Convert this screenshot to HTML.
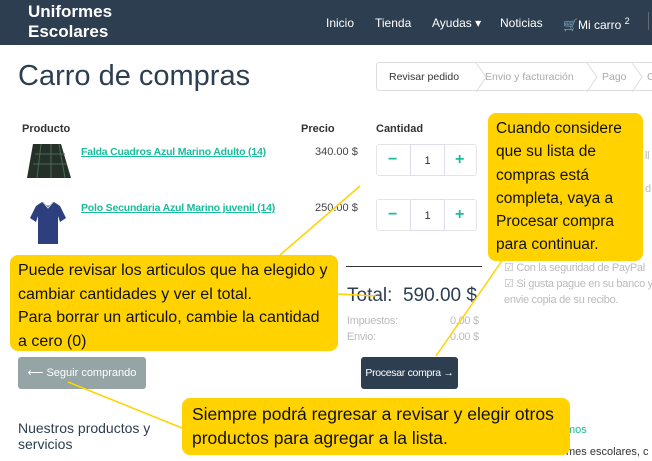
<!DOCTYPE html>
<html><head><meta charset="utf-8"><style>
*{box-sizing:border-box;margin:0;padding:0}
body{width:652px;height:461px;overflow:hidden;background:#fff;font-family:"Liberation Sans",sans-serif;color:#2c3e50;position:relative}
.nav{position:absolute;left:0;top:0;width:652px;height:45px;background:#2c3e50;color:#fff}
.brand{position:absolute;left:28px;top:2px;font-weight:bold;font-size:17px;line-height:20px}
.nav span{position:absolute;top:16px;font-size:12px;white-space:nowrap}
.ab{position:absolute}
h1{position:absolute;left:18px;top:60px;font-weight:normal;font-size:29px;color:#2c3e50}
.steps{position:absolute;left:376px;top:62px;width:290px;height:29px;border:1px solid #ddd;border-radius:3px;font-size:10.5px}
.steps span{position:absolute;top:8px;white-space:nowrap}
.th{position:absolute;top:123px;font-size:11px;font-weight:bold;color:#333}
.link{position:absolute;font-size:10.5px;color:#1abc9c;text-decoration:underline;font-weight:bold;white-space:nowrap;letter-spacing:-0.2px}
.pr{position:absolute;font-size:11px;color:#444}
.qty{position:absolute;left:376px;width:101px;height:32px;border:1px solid #e5e5e5;border-radius:3px}
.qty b{position:absolute;top:6px;color:#1abc9c;font-size:16px}
.qty i{position:absolute;left:33px;top:-1px;width:35px;height:32px;border:1px solid #dde;font-style:normal;font-size:11px;text-align:center;line-height:32px;color:#333}
.call{position:absolute;background:#ffd200;border-radius:8px;color:#111;font-size:16px;padding:4px 8px;white-space:nowrap}
.gray{color:#bbb;font-size:11px;position:absolute;white-space:nowrap;letter-spacing:-0.3px}
</style></head><body>
<div class="nav">
<div class="brand">Uniformes<br>Escolares</div>
<span style="left:326px">Inicio</span>
<span style="left:375px">Tienda</span>
<span style="left:432px">Ayudas ▾</span>
<span style="left:500px">Noticias</span>
<span style="left:563px">🛒Mi carro <sup style="font-size:9px">2</sup></span>
<div class="ab" style="left:648px;top:12px;width:1px;height:18px;background:#667"></div>
</div>
<h1>Carro de compras</h1>
<div class="steps"><span style="left:12px;color:#333">Revisar pedido</span><span style="left:108px;color:#aaa">Envio y facturación</span><span style="left:225px;color:#aaa">Pago</span><span style="left:270px;color:#aaa">C</span>
<svg class="ab" style="left:0;top:0" width="290" height="29"><polyline points="99,0 109,14 99,29" fill="none" stroke="#ddd"/><polyline points="210,0 220,14 210,29" fill="none" stroke="#ddd"/><polyline points="255,0 265,14 255,29" fill="none" stroke="#ddd"/></svg></div>
<div class="th" style="left:22px">Producto</div><div class="th" style="left:301px">Precio</div><div class="th" style="left:376px">Cantidad</div>
<svg class="ab" style="left:25px;top:142px" width="50" height="40"><polygon points="8,2 36,2 46,36 2,36" fill="#253028"/><path d="M10,12H40M8,22H42M16,2L12,36M26,2V36M34,2L40,36" stroke="#4a6a52" stroke-width="1"/></svg>
<svg class="ab" style="left:28px;top:200px" width="40" height="48"><path d="M14,2L8,6L2,18L8,22L10,16V44H30V16L32,22L38,18L32,6L26,2L20,6Z" fill="#2d3f7c"/><path d="M15,2L20,8L25,2" stroke="#ddd" fill="none"/></svg>
<div class="link" style="left:81px;top:146px">Falda Cuadros Azul Marino Adulto (14)</div>
<div class="link" style="left:81px;top:202px">Polo Secundaria Azul Marino juvenil (14)</div>
<div class="pr" style="left:315px;top:146px">340.00 $</div>
<div class="pr" style="left:315px;top:202px">250.00 $</div>
<div class="qty" style="top:144px"><b style="left:11px">−</b><i>1</i><b style="left:78px">+</b></div>
<div class="qty" style="top:199px"><b style="left:11px">−</b><i>1</i><b style="left:78px">+</b></div>
<div class="ab" style="left:346px;top:266px;width:136px;height:1px;background:#333"></div>
<div class="ab" style="left:347px;top:285px;font-size:19px;color:#2c3e50;white-space:nowrap">Total: &nbsp;590.00 $</div>
<div class="gray" style="left:347px;top:315px">Impuestos:</div><div class="gray" style="left:450px;top:315px">0.00 $</div>
<div class="gray" style="left:347px;top:331px">Envio:</div><div class="gray" style="left:450px;top:331px">0.00 $</div>
<div class="gray" style="left:504px;top:260px;line-height:16px">☑ Con la seguridad de PayPal<br>☑ Si gusta pague en su banco y<br>envie copia de su recibo.</div>
<div class="gray" style="left:645px;top:150px">ll</div><div class="gray" style="left:645px;top:183px">d</div>
<div class="ab" style="left:18px;top:357px;width:128px;height:32px;background:#95a5a6;border-radius:3px;color:#fff;font-size:11px;text-align:center;line-height:32px;white-space:nowrap">⟵ Seguir comprando</div>
<div class="ab" style="left:361px;top:357px;width:97px;height:32px;background:#2c3e50;border-radius:3px;color:#fff;font-size:10.5px;text-align:center;line-height:32px;white-space:nowrap;letter-spacing:-0.3px">Procesar compra →</div>
<div class="ab" style="left:18px;top:420px;font-size:14px;line-height:16px;color:#2c3e50">Nuestros productos y<br>servicios</div>
<div class="ab" style="left:566px;top:424px;font-size:11px;color:#1abc9c">mos</div>
<div class="ab" style="left:566px;top:446px;font-size:11px;color:#333;white-space:nowrap">mes escolares, c</div>
<svg class="ab" style="left:0;top:0" width="652" height="461"><g stroke="#ffd200" stroke-width="1.5"><line x1="280" y1="255" x2="360" y2="186"/><line x1="338" y1="294" x2="376" y2="296"/><line x1="436" y1="356" x2="506" y2="255"/><line x1="68" y1="382" x2="182" y2="428"/></g></svg>
<div class="call" style="left:488px;top:113px;width:155px;height:148px;font-size:15.5px;line-height:23.3px">Cuando considere<br>que su lista de<br>compras está<br>completa, vaya a<br>Procesar compra<br>para continuar.</div>
<div class="call" style="left:10px;top:255px;width:328px;height:96px;line-height:23.5px;font-size:16px">Puede revisar los articulos que ha elegido y<br>cambiar cantidades y ver el total.<br>Para borrar un articulo, cambie la cantidad<br>a cero (0)</div>
<div class="call" style="left:182px;top:398px;width:388px;height:57px;padding:4px 10px;line-height:24px;font-size:17.5px">Siempre podrá regresar a revisar y elegir otros<br>productos para agregar a la lista.</div>
</body></html>
